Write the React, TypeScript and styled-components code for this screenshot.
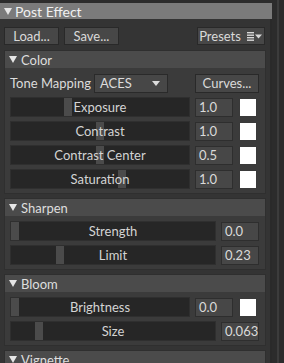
import styled, { createGlobalStyle } from 'styled-components'

const GlobalStyle = createGlobalStyle`
    html, body {
        margin: 0;
        padding: 0;
        background: #2c2c2c;
    }
    * {
        box-sizing: border-box;
    }
`

const Frame = styled.div`
    width: 284px;
    height: 363px;
    overflow: hidden;
    display: flex;
    background-color: #2c2c2c;
    font-family: Lato, 'Open Sans', sans-serif;
    font-size: 13px;
    color: #dcdcdc;
`

const Inspector = styled.div`
    width: 272px;
    padding-top: 3px;
    display: flex;
    flex-direction: column;
`

const Scrollbar = styled.div`
    width: 12px;
    display: flex;
    justify-content: center;

    &::before {
        content: '';
        width: 2px;
        background-color: #3c3c3c;
    }
`

const TitleBar = styled.header`
    height: 16px;
    display: flex;
    align-items: center;
    gap: 3px;
    padding-left: 4px;
    background-color: #7b7b7b;
    color: #f0f0f0;
    font-size: 14px;
`

const Caret = styled.span`
    display: inline-block;
    width: 0;
    height: 0;
    border-left: 4px solid transparent;
    border-right: 4px solid transparent;
    border-top: 7px solid #e6e6e6;
`

const Body = styled.div`
    flex: 1;
    background-color: #343434;
    border-right: 2px solid #2a2a2a;
    padding: 8px 4px 0 4px;
    display: flex;
    flex-direction: column;
`

const Toolbar = styled.div`
    display: flex;
    gap: 5px;
    height: 18px;
    margin-bottom: 5px;
`

const Button = styled.button<{ $w: number; $push?: boolean }>`
    width: ${(p) => p.$w}px;
    height: 100%;
    margin-left: ${(p) => (p.$push ? 'auto' : '0')};
    margin-right: ${(p) => (p.$push ? '1px' : '0')};
    padding: 0;
    display: flex;
    align-items: center;
    justify-content: center;
    gap: 6px;
    background-color: #474747;
    border: 1px solid #292929;
    color: #dadada;
    font-family: inherit;
    font-size: 13px;
    line-height: 1;
`

const Sections = styled.div`
    display: flex;
    flex-direction: column;
    gap: 4px;
`

const Section = styled.section`
    background-color: #3b3b3b;
    border: 1px solid #2f2f2f;
`

const SectionHead = styled.header`
    height: 17px;
    display: flex;
    align-items: center;
    gap: 4px;
    padding-left: 4px;
    background-color: #4b4b4b;
    color: #dedede;
    font-size: 13px;
`

const SectionBody = styled.div`
    padding: 5px 6px 4px 5px;
    display: flex;
    flex-direction: column;
    gap: 4px;
`

const Row = styled.div`
    height: 20px;
    display: flex;
    align-items: center;
`

const Label = styled.span`
    width: 84px;
    white-space: nowrap;
`

const Select = styled.div`
    width: 74px;
    height: 19px;
    display: flex;
    align-items: center;
    justify-content: space-between;
    padding: 0 7px 0 5px;
    background-color: #474747;
    border: 1px solid #2a2a2a;
`

const SmallCaret = styled(Caret)`
    border-left-width: 4px;
    border-right-width: 4px;
    border-top: 5px solid #dcdcdc;
`

const Track = styled.div`
    position: relative;
    flex: 1;
    height: 20px;
    background-color: #262626;
    border: 1px solid #2f2f2f;
    display: flex;
    align-items: center;
    justify-content: center;
    color: #d4d4d4;
`

const Handle = styled.div`
    position: absolute;
    top: 0;
    bottom: 0;
    width: 8px;
    background-color: #4b4b4b;
`

const TrackLabel = styled.span`
    position: relative;
`

const Value = styled.div`
    width: 38px;
    height: 19px;
    margin-left: 5px;
    padding-left: 3px;
    display: flex;
    align-items: center;
    background-color: #474747;
    border: 1px solid #2e2e2e;
    color: #dadada;
`

const Swatch = styled.div`
    width: 18px;
    height: 19px;
    margin-left: 6px;
    margin-right: 2px;
    background-color: #ffffff;
    border: 1px solid #3a3a3a;
`

const PresetIcon = () => (
    <svg width="16" height="9" viewBox="0 0 16 9">
        <rect x="0" y="0" width="7" height="1.4" fill="#d8d8d8" />
        <rect x="0" y="2.5" width="7" height="1.4" fill="#d8d8d8" />
        <rect x="0" y="5" width="7" height="1.4" fill="#d8d8d8" />
        <rect x="0" y="7.5" width="7" height="1.4" fill="#d8d8d8" />
        <polygon points="8,2.5 15,2.5 11.5,6.5" fill="#d8d8d8" />
    </svg>
)

interface SliderProps {
    label: string
    offset: number
    value: string
    swatch?: boolean
}

const Slider = ({ label, offset, value, swatch }: SliderProps) => (
    <Row>
        <Track>
            <Handle style={{ left: offset }} />
            <TrackLabel>{label}</TrackLabel>
        </Track>
        <Value>{value}</Value>
        {swatch && <Swatch />}
    </Row>
)

const colorRows = [
    { label: 'Exposure', offset: 53, value: '1.0' },
    { label: 'Contrast', offset: 85, value: '1.0' },
    { label: 'Contrast Center', offset: 85, value: '0.5' },
    { label: 'Saturation', offset: 107, value: '1.0' },
]

export default function App() {
    return (
        <>
            <GlobalStyle />
            <Frame>
                <Inspector>
                    <TitleBar>
                        <Caret />
                        Post Effect
                    </TitleBar>
                    <Body>
                        <Toolbar>
                            <Button $w={55}>Load...</Button>
                            <Button $w={55}>Save...</Button>
                            <Button $w={68} $push>
                                Presets <PresetIcon />
                            </Button>
                        </Toolbar>
                        <Sections>
                            <Section>
                                <SectionHead>
                                    <Caret />
                                    Color
                                </SectionHead>
                                <SectionBody>
                                    <Row>
                                        <Label>Tone Mapping</Label>
                                        <Select>
                                            ACES <SmallCaret />
                                        </Select>
                                        <Button $w={64} $push style={{ height: 19, marginRight: 0 }}>
                                            Curves...
                                        </Button>
                                    </Row>
                                    {colorRows.map((r) => (
                                        <Slider key={r.label} {...r} swatch />
                                    ))}
                                </SectionBody>
                            </Section>
                            <Section>
                                <SectionHead>
                                    <Caret />
                                    Sharpen
                                </SectionHead>
                                <SectionBody>
                                    <Slider label="Strength" offset={0} value="0.0" />
                                    <Slider label="Limit" offset={45} value="0.23" />
                                </SectionBody>
                            </Section>
                            <Section>
                                <SectionHead>
                                    <Caret />
                                    Bloom
                                </SectionHead>
                                <SectionBody>
                                    <Slider label="Brightness" offset={0} value="0.0" swatch />
                                    <Slider label="Size" offset={24} value="0.063" />
                                </SectionBody>
                            </Section>
                            <Section>
                                <SectionHead>
                                    <Caret />
                                    Vignette
                                </SectionHead>
                            </Section>
                        </Sections>
                    </Body>
                </Inspector>
                <Scrollbar />
            </Frame>
        </>
    )
}
